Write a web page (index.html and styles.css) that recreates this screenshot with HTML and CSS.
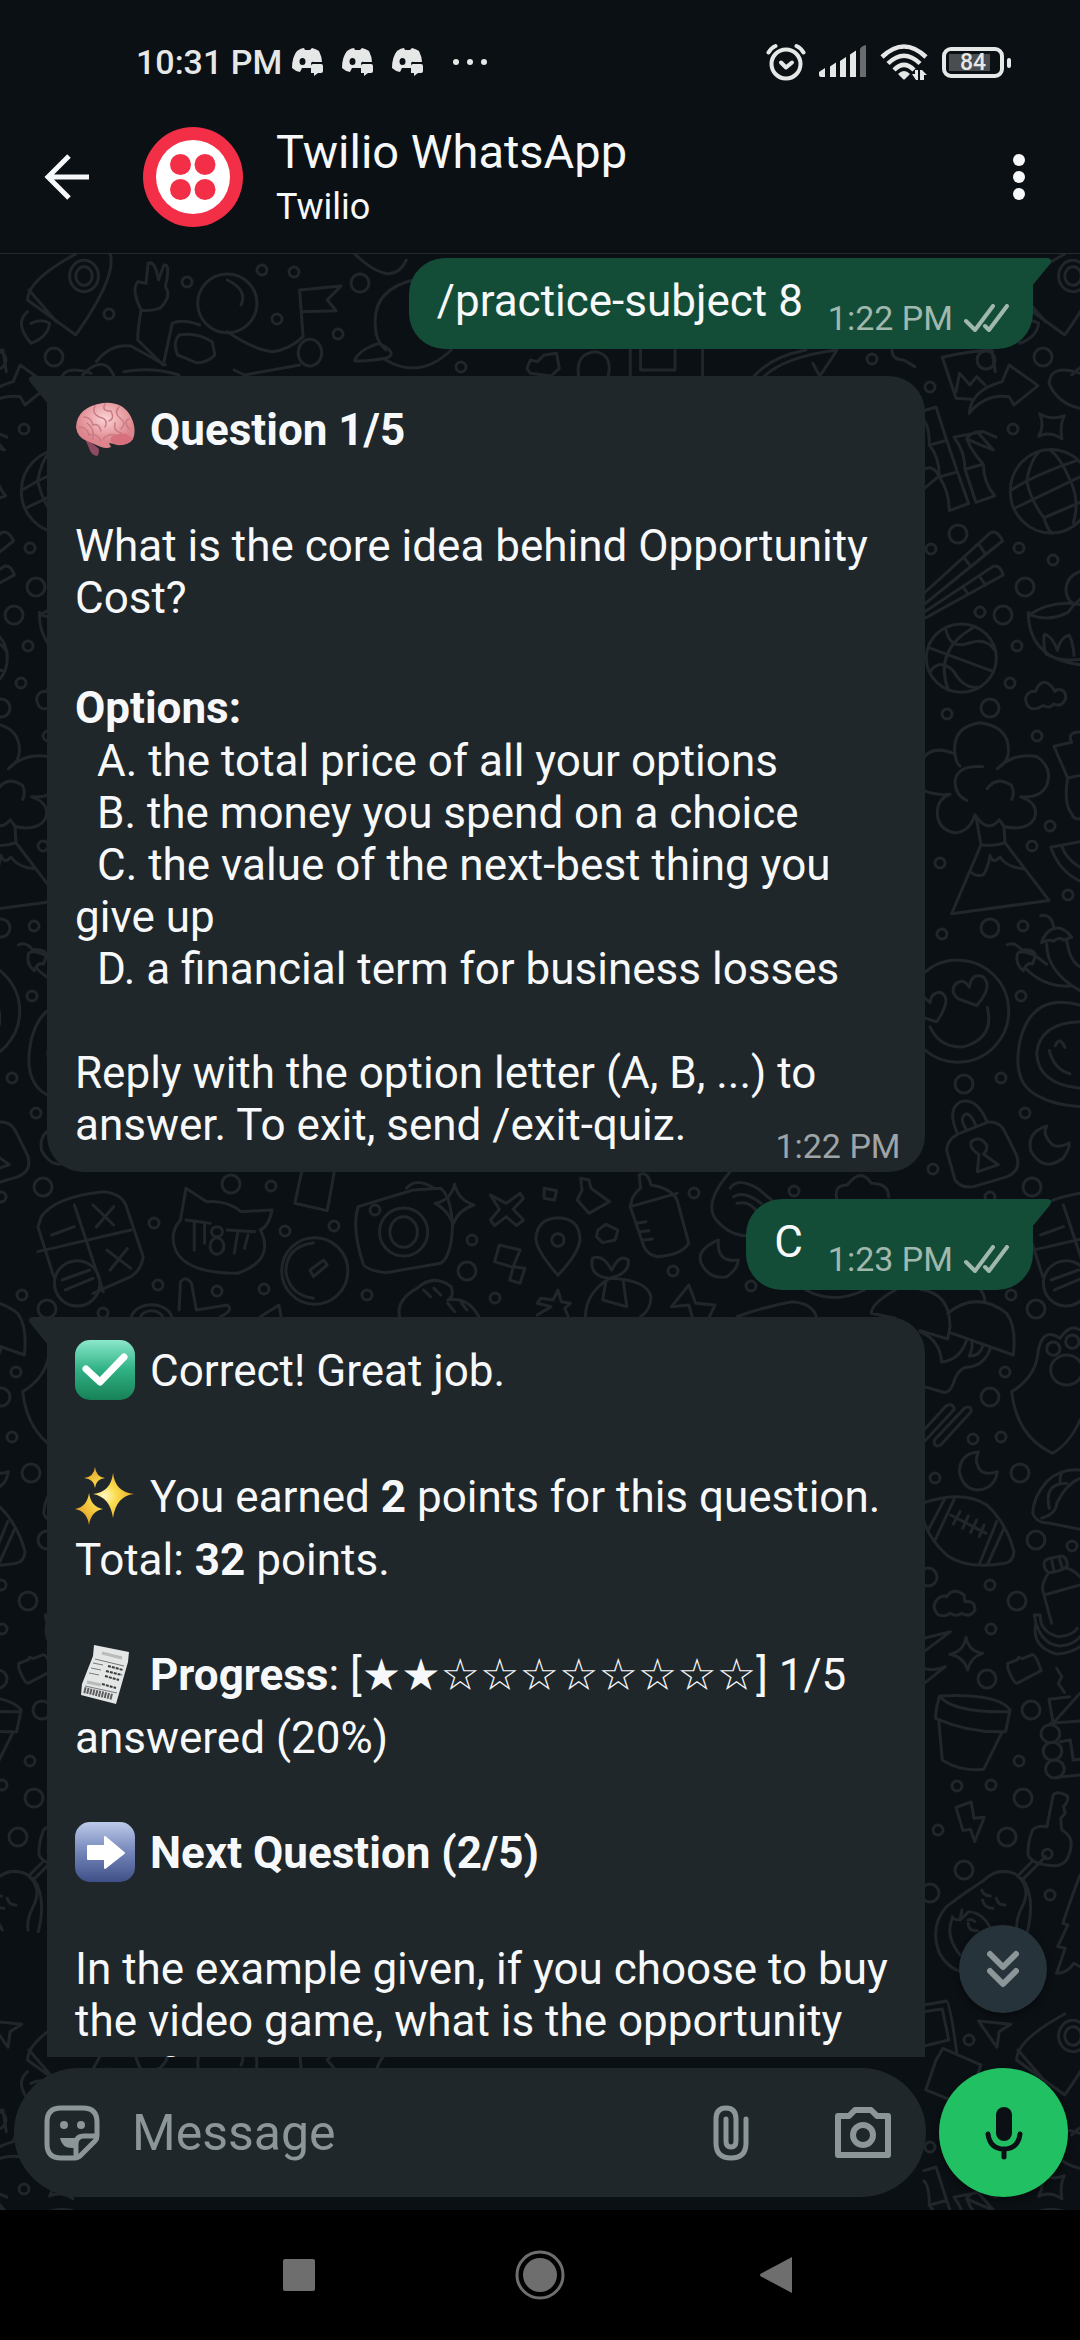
FILE: index.html
```
<!DOCTYPE html>
<html lang="en">
<head>
    <meta charset="UTF-8">
    <meta name="viewport" content="width=device-width, initial-scale=1.0">
    <title>Twilio WhatsApp</title>
    <link rel="stylesheet" href="styles.css">
</head>
<body>
    <div class="status-bar">
        <span class="clock">10:31 PM</span>
        <svg class="discord" viewBox="0 0 32 28"><use href="#discord"/></svg>
        <svg class="discord" viewBox="0 0 32 28"><use href="#discord"/></svg>
        <svg class="discord" viewBox="0 0 32 28"><use href="#discord"/></svg>
        <svg class="dots" viewBox="0 0 36 8"><circle cx="4" cy="4" r="3"/><circle cx="18" cy="4" r="3"/><circle cx="32" cy="4" r="3"/></svg>
        <div class="status-icons">
            <svg width="40" height="40" viewBox="0 0 40 40" fill="none" stroke="#e6e8e7" stroke-width="4" stroke-linecap="round" stroke-linejoin="round"><circle cx="20" cy="22" r="14.5"/><path d="M15 20.500l5 5 6-5"/><path d="M2.500 10.500Q5 6 9.500 4M30.500 4Q35 6 37.500 10.500"/></svg>
            <svg width="50" height="34" viewBox="0 0 50 34" fill="#e6e8e7"><path d="M1 27l6-4v9H3q-2 0-2-2zM12 21.500l6-4V32h-6zM22 16l6-4v20h-6zM32 9.500l6-4V32h-6z"/><path fill="#6a6d6f" d="M42 4q1-3 6-4v32h-6z"/></svg>
            <svg width="50" height="38" viewBox="0 0 50 38" fill="none" stroke="#e6e8e7" stroke-width="4.500"><path d="M2 14Q24-7 46 14M8 20.500Q24 5 40 20.500M14 27Q24 17 34 27"/><path fill="#e6e8e7" stroke="none" d="M18 31Q24 25 30 31L25 36Q24 37 23 36zM32 31h3v-4h3v10h-2zM40 27h2l5 5h-3v5h-4z"/></svg>
            <div class="battery">
                <span>84</span>
            </div>
        </div>
    </div>

    <header class="chat-header">
        <button class="back" aria-label="Back">
            <svg width="46" height="46" viewBox="0 0 46 46" fill="none" stroke="#f7f8fa" stroke-width="5"><path d="M45 23H5M25 2L4 23l21 21"/></svg>
        </button>
        <svg class="avatar" viewBox="0 0 100 100">
            <circle cx="50" cy="50" r="50" fill="#f22f46"/>
            <circle cx="50" cy="50" r="37" fill="#fff"/>
            <g fill="#f22f46"><circle cx="37.500" cy="37.500" r="10.500"/><circle cx="62" cy="37.500" r="10.500"/><circle cx="37.500" cy="62.500" r="10.500"/><circle cx="62" cy="62.500" r="10.500"/></g>
        </svg>
        <div class="contact">
            <h1>Twilio WhatsApp</h1>
            <p>Twilio</p>
        </div>
        <button class="more" aria-label="More options">
            <svg width="12" height="46" viewBox="0 0 12 46" fill="#f7f8fa"><circle cx="6" cy="6" r="6"/><circle cx="6" cy="23" r="6"/><circle cx="6" cy="40" r="6"/></svg>
        </button>
    </header>

    <div class="conversation">
        <!-- wallpaper: one tile of doodles, repeated with use -->
        <svg class="wallpaper" aria-hidden="true">
            <defs>
                <marker id="small" markerUnits="userSpaceOnUse" markerWidth="30" markerHeight="30" refX="15" refY="15"><circle cx="15" cy="15" r="5"/></marker>
                <marker id="big" markerUnits="userSpaceOnUse" markerWidth="30" markerHeight="30" refX="15" refY="15"><circle cx="15" cy="15" r="9"/></marker>
                <g id="tile">
                    <polyline class="small-dots" points="930,387 1013,429 931,549 1019,548 1053,560 980,612 1017,646 1010,683 947,714 1037,736 1050,826 1032,846 940,863 1068,895 942,934 1023,926 1021,996 1001,1078 1025,1113 933,1169 990,1197 1011,1295 1005,1372 973,1439 1001,1437 935,1478 1072,1546 990,1585 991,1629 1019,1761 957,1786 991,1785 938,1830 1050,1895 969,2040 262,270 294,272 187,282 109,314 277,319 338,334 461,367 872,359 271,1186 154,1223 285,1231 334,1226 375,1210 472,1240 694,1193 794,1191 673,1271 217,1291 158,1285 264,1289 367,1295 495,1298 103,1313 751,1286"/>
                    <polyline class="big-dots" points="958,534 1025,587 1003,615 990,708 990,928 964,1084 1032,1187 1036,1309 990,1397 1020,1473 1036,1540 928,1577 1017,1601 987,1679 1031,1710 1023,1798 964,1870 1007,1837 930,1893 360,283 1043,357 986,360 231,1184 467,1271"/>
                    <g transform="translate(0 240) scale(.6888 .3333)">
                        <path d="M160 42Q170 110 110 285L40 180Q40 120 110 42M42 150L82 245M40 215Q20 250 45 310Q70 290 72 250Q60 235 45 250"/>
                        <ellipse cx="122" cy="108" rx="21" ry="47"/><ellipse cx="122" cy="108" rx="12" ry="28"/>
                        <path d="M205 210Q190 150 200 125L212 130L215 70Q225 60 230 120L238 75Q248 70 240 140Q250 170 232 205Q215 215 205 210Q200 260 200 300L237 375L250 250Q265 235 290 255"/>
                        <ellipse cx="330" cy="190" rx="43" ry="88"/>
                        <path d="M330 120Q360 150 350 195M330 275Q370 330 395 335Q420 330 440 290M260 285Q285 275 308 305L312 345Q300 370 285 368L258 345Q250 310 260 285ZM140 365Q160 310 190 318L240 375M120 405Q150 340 165 405M180 395Q220 380 260 405M340 390L355 405L435 375"/>
                        <ellipse cx="450" cy="338" rx="17" ry="40"/>
                        <path d="M435 150L495 138L475 180L488 212L438 215M435 150L440 290M515 42Q570 150 590 60M600 120Q540 150 545 260Q545 300 560 330M515 362Q520 330 550 310Q580 340 560 355Q530 365 515 362M560 360Q610 420 655 330"/>
                        <path d="M765 385L770 360L780 365L790 345L808 340L812 385L800 408L770 400ZM840 408Q835 340 865 335Q890 345 883 408M915 408L915 330M1020 408L1020 330M930 330V390H980V330M1095 408Q1120 350 1170 330M1110 408Q1140 350 1215 330Q1200 380 1190 408L1180 370M1295 330Q1295 360 1312 360L1328 380"/>
                        <path d="M1368 352Q1400 335 1440 330L1445 395M1368 352L1388 475L1410 478M1388 455L1393 400L1408 435L1418 410L1430 435M1407 520Q1410 450 1455 425L1465 375L1507 437L1472 495L1465 470Q1430 460 1407 520M1568 400Q1525 370 1523 430Q1535 490 1568 505"/>
                    </g>
                    <g transform="translate(900 380) scale(.3333 .5102)">
                        <path d="M72 60L108 53L140 118L172 180L206 242L148 256Q148 220 118 190Q118 150 88 128Q88 90 72 80M88 128L140 118M118 190L172 180M72 175Q100 165 118 190M72 213L118 188M162 112L250 101M162 112Q195 140 195 175L228 240L284 227Q250 200 250 165L195 175M250 165Q215 140 200 115Q215 100 250 101L288 112M200 115Q240 128 280 137L235 104"/>
                        <path d="M419 66Q455 80 493 70Q478 90 486 115Q450 100 416 110Q435 90 419 66Z"/>
                        <ellipse cx="453" cy="218" rx="122" ry="82"/>
                        <path d="M335 215L380 198Q390 160 415 142M380 198Q395 240 432 270M348 250L540 190M380 198Q450 175 530 158M432 270Q440 290 455 300M432 270L540 240M513 200Q480 150 450 137M513 200Q540 240 520 280"/>
                        <path d="M72 418L270 300Q290 292 308 315L72 440M192 348L208 362M238 323L255 340M72 455L280 365Q300 362 310 382L72 468M188 405L205 420M238 385L255 400"/>
                        <ellipse cx="184" cy="545" rx="105" ry="67"/>
                        <path d="M88 525L275 570M137 488Q150 530 210 515Q260 505 285 530M220 485Q100 530 145 608M92 570Q120 545 160 570Q190 605 230 602"/>
                        <path d="M387 460Q460 430 540 440M387 460Q450 475 505 455Q520 440 540 430M385 455Q385 545 540 558M432 500Q430 530 440 538Q480 552 540 548M435 498Q460 505 472 530Q480 505 507 500Q520 515 522 540M540 375Q500 385 498 410Q498 430 520 438"/>
                        <path d="M385 640Q365 620 395 610Q410 612 410 605Q430 580 460 605Q465 615 470 607Q500 605 497 625Q485 642 460 635Q450 645 430 638Q400 650 385 640Z"/>
                        <path d="M72 740Q100 715 165 733Q155 680 240 672Q330 680 325 730Q322 750 292 762Q340 730 410 738Q460 760 440 795Q420 820 362 817Q420 830 403 860Q380 885 312 875L298 862Q262 890 225 852Q210 885 165 888Q110 880 112 845Q115 820 150 812Q110 815 72 805M165 733Q168 750 180 757M248 758Q165 755 165 790Q168 815 200 824M262 801Q290 775 335 795Q345 810 335 822M228 855L243 911L155 1046L447 1020L315 907L312 875M243 911Q280 915 315 907M210 962Q225 975 250 970Q265 955 270 932Q280 950 300 935Q320 955 370 958"/>
                        <path d="M540 905L452 916Q480 965 540 982M486 915Q500 940 540 955M540 690Q500 690 515 710L462 718Q470 730 503 780Q490 830 515 850Q520 862 540 860M503 780L540 775"/>
                        <path d="M322 1107Q345 1100 365 1117Q410 1115 405 1130L398 1145Q380 1140 370 1158Q345 1145 352 1125Q360 1115 405 1128L440 1145M375 1152Q430 1190 510 1188M422 1050Q455 1045 462 1075Q435 1080 425 1103Q445 1095 460 1100Q480 1090 490 1098L515 1092Q490 1070 462 1075M440 1105Q440 1160 540 1197M500 1098Q510 1140 540 1150"/>
                        <path d="M72 1162A153 100 0 1 1 72 1312M230 1226L175 1213Q150 1200 165 1185Q190 1170 208 1190Q215 1160 250 1170Q280 1190 230 1226M72 1210L90 1220Q95 1200 120 1200Q160 1210 110 1258L72 1250M90 1268Q120 1310 190 1307Q285 1290 262 1230"/>
                        <path d="M540 1225Q400 1200 362 1290Q330 1380 420 1405Q460 1420 540 1424M540 1258Q420 1260 410 1320Q415 1380 540 1388M448 1314Q460 1350 510 1360M466 1305Q478 1285 495 1308"/>
                        <path d="M440 1462Q380 1475 392 1510Q430 1555 490 1525Q510 1505 508 1495Q480 1505 460 1500Q425 1480 440 1462Z"/>
                        <path d="M173 1478Q140 1430 180 1415Q230 1405 262 1455M198 1468Q175 1445 200 1438Q215 1440 228 1462M140 1510Q140 1490 173 1478L262 1455Q300 1450 320 1480L350 1520Q365 1550 320 1562L220 1581Q185 1585 165 1568ZM232 1552L237 1518Q205 1505 215 1492Q240 1480 260 1500Q262 1512 250 1517L295 1538Z"/>
                    </g>
                    <g transform="translate(0 1160) scale(.6888 .3333)">
                        <path d="M60 170Q80 110 150 95Q180 100 185 150L208 290Q205 330 190 350L135 400M60 170L55 200L78 350M108 135L150 395M55 275L190 210M75 225L108 200M135 135L165 195M165 140L140 200M155 270L190 325M185 265L160 330M90 360L130 330M95 390L135 355"/>
                        <ellipse cx="112" cy="370" rx="33" ry="68"/>
                        <path d="M270 85L300 125Q330 120 350 155L395 150Q390 200 378 210Q400 300 345 340Q270 340 255 270Q245 220 262 180ZM270 180L305 190M282 190V270M297 190V250M330 210L370 215M345 220L340 280M360 225L355 265"/>
                        <ellipse cx="315" cy="215" rx="8" ry="15"/><ellipse cx="315" cy="258" rx="10" ry="25"/>
                        <path d="M438 35L428 130L475 152L485 40M455 248Q415 260 415 335Q420 405 455 415M470 300L450 330L455 350L475 315Z"/>
                        <ellipse cx="457" cy="333" rx="48" ry="100"/>
                        <path d="M520 140L600 90L640 85Q655 110 657 200Q655 290 640 310L560 338Q530 330 527 310Q510 200 520 140ZM590 85Q605 50 630 85"/>
                        <ellipse cx="586" cy="216" rx="35" ry="72"/><ellipse cx="586" cy="216" rx="20" ry="46"/>
                        <path d="M660 72Q665 120 688 135Q665 150 658 192Q650 150 632 130Q655 120 660 72ZM712 105L735 130L755 100L760 115L745 148L760 180L750 197L735 170L718 197L712 180L725 148ZM810 346Q778 270 778 235Q780 175 810 173Q842 175 842 240Q840 280 810 346ZM725 255L755 270L745 320L762 325L755 370L740 360L745 322L718 305ZM790 85L808 92L805 120L790 115ZM868 210L880 193L897 210L893 240L875 248L866 230ZM843 55L855 60L858 85L885 125L855 160L838 120L845 90Z"/>
                        <ellipse cx="810" cy="240" rx="9" ry="19"/>
                        <path d="M915 140L918 115Q925 90 930 85L928 45Q940 30 945 75Q975 85 983 120L1000 250Q990 285 955 290Q940 285 935 260L915 140L983 100M925 190L938 185M930 215L942 212M935 240L947 237M1060 35Q1020 130 1040 180Q1060 230 1090 228M1060 85Q1070 50 1100 85L1120 120M1065 110Q1080 90 1105 130M1070 130Q1090 120 1100 160M1043 240Q1010 270 1018 310Q1030 360 1055 350Q1070 330 1072 300Q1040 310 1043 240ZM1215 118Q1210 75 1230 75Q1250 20 1265 70Q1290 70 1290 110"/>
                        <path d="M260 450L262 365Q270 345 278 370L285 450L330 435Q340 450 320 470M580 470Q575 420 605 385Q630 340 655 380Q660 410 650 420Q680 410 695 470M615 390L625 410M630 385L640 405M650 430L660 455M670 430L678 450M780 465L800 440L780 430L785 415L803 420L810 390L815 425L828 430L820 445L825 470M885 355Q855 350 860 295Q875 280 888 330Q900 280 912 300Q915 340 885 355Q850 400 850 470M885 355Q940 360 945 410Q945 450 930 470M880 360L875 420L910 440L905 365M1000 375L975 440L1000 435L1005 470M1000 375L1010 430L1038 435L1030 470M1070 470Q1110 440 1150 425Q1180 430 1185 470M1170 390Q1210 435 1255 390M1300 390Q1265 430 1265 460L1300 475M378 470L405 435L408 470"/>
                        <ellipse cx="220" cy="480" rx="30" ry="46"/><ellipse cx="220" cy="480" rx="17" ry="28"/>
                    </g>
                    <g transform="translate(900 1160) scale(.3333)">
                        <path d="M60 388Q150 400 150 500L143 537L60 512M143 460Q230 390 320 460Q350 500 340 585L150 518M240 388Q255 405 255 428M60 515Q120 540 125 606Q180 600 200 540M215 545Q220 560 208 588Q240 590 248 558M270 568Q250 620 200 622Q175 625 160 670Q150 700 130 697L72 680"/>
                        <path d="M72 810L138 738Q160 728 163 748L72 846M103 840L195 743Q215 735 213 755L122 855Q100 865 103 840ZM235 876Q180 880 178 935Q190 990 235 990Q285 985 292 935Q265 945 245 935Q220 910 235 876Z"/>
                        <path d="M72 1028Q190 990 260 1035Q320 1090 342 1175Q340 1205 315 1210Q200 1230 140 1185Q90 1140 72 1085M135 1015L85 1110M165 1012L103 1145M290 1085L237 1215M312 1105L262 1215M152 1065L258 1120M180 1055L160 1092M205 1068L188 1105M230 1080L212 1117M252 1095L238 1130"/>
                        <path d="M115 1365Q90 1340 115 1315Q130 1305 140 1310Q160 1280 192 1305L195 1325Q225 1320 225 1350Q210 1375 185 1360Q170 1372 150 1360Q135 1372 115 1365Z"/>
                        <path d="M335 695Q410 650 415 570Q430 500 480 535Q510 490 540 510M335 695Q350 830 458 880Q510 850 540 780"/>
                        <circle cx="460" cy="566" r="20"/><circle cx="517" cy="545" r="20"/><ellipse cx="500" cy="630" rx="48" ry="45"/>
                        <path d="M540 930Q480 925 440 965Q400 1010 398 1060Q410 1090 440 1088L540 1108M425 1075Q470 1060 470 1030Q500 970 540 955M448 1045Q430 970 500 970M480 968Q480 940 490 935M432 1215Q430 1200 450 1195L485 1188Q500 1190 502 1215Q500 1230 450 1238Q435 1235 432 1215M455 1200L462 1232M478 1195L487 1225M445 1240Q425 1270 428 1290L455 1390M540 1250Q520 1230 500 1225M432 1305L540 1275"/>
                    </g>
                    <g transform="translate(540 1560) scale(.3444 .3333)">
                        <path d="M1115 235L1192 215L1115 275M1115 325Q1150 335 1177 320L1115 370M1237 232Q1245 275 1285 280Q1250 290 1242 330Q1230 290 1190 283Q1230 275 1237 232ZM1358 310L1385 300L1390 292L1400 296L1430 284Q1440 284 1455 332L1385 370Q1375 370 1358 325Z"/>
                        <path d="M1435 165L1453 165Q1450 215 1505 230Q1550 225 1560 205M1435 165L1440 190Q1425 260 1500 282Q1540 280 1568 260M1440 190Q1460 255 1510 258Q1550 255 1568 230"/>
                        <path d="M1160 408Q1150 440 1148 475Q1250 520 1352 515L1365 450Q1330 400 1160 408Q1200 460 1365 455M1158 485L1168 600Q1220 635 1288 628L1340 520M1208 742L1252 726L1260 775L1290 772L1262 845L1250 808L1228 812Z"/>
                        <path d="M1472 800L1490 705Q1500 690 1532 708Q1535 725 1520 740L1525 760L1512 775L1515 810Q1550 830 1540 870Q1530 920 1490 917Q1430 915 1417 885Q1415 850 1430 810Q1445 795 1472 800M1468 890L1405 955M1430 903L1390 945"/>
                        <circle cx="1473" cy="882" r="14"/>
                        <path d="M1380 942Q1330 920 1290 960Q1230 1000 1180 1040Q1130 1100 1160 1180Q1180 1220 1220 1235M1380 942Q1430 980 1400 1040Q1380 1080 1385 1110M1400 955Q1440 1010 1415 1115M1310 1110Q1290 1060 1245 1055L1220 1080L1225 1050M1220 1080Q1200 1080 1197 1070M1197 1075Q1175 1130 1220 1185M1283 990Q1285 1005 1308 1008M1285 1020Q1290 1045 1315 1045M1325 1015Q1330 1035 1350 1035M1243 1080Q1255 1075 1262 1085M1243 1090Q1245 1115 1270 1112"/>
                        <path d="M1568 945Q1540 1020 1518 1090L1533 1095L1503 1160L1525 1165Q1510 1210 1500 1240Q1530 1240 1550 1210L1568 1220M1478 418L1538 410M1478 418L1490 490L1568 400M1482 490L1568 483M1500 325L1515 350L1505 370L1523 397M1510 545L1540 540L1548 600L1568 598M1500 652L1568 645"/>
                        <circle cx="1482" cy="521" r="27"/><circle cx="1488" cy="574" r="27"/><circle cx="1495" cy="627" r="27"/>
                        <path d="M1115 1335L1180 1323Q1190 1325 1210 1478M1115 1355L1168 1347L1187 1440L1115 1458M1150 1500L1170 1465L1280 1515L1240 1640L1120 1590ZM1273 1383L1367 1393L1333 1415L1327 1462Z"/>
                    </g>
                </g>
            </defs>
            <g transform="translate(0 -254)">
                <use href="#tile" x="-989"/>
                <use href="#tile"/>
                <use href="#tile" x="989"/>
                <use href="#tile" x="-989" y="1760"/>
                <use href="#tile" y="1760"/>
                <use href="#tile" x="989" y="1760"/>
            </g>
        </svg>

        <main class="messages">
            <div class="bubble out">
                <p>/practice-subject 8</p>
                <span class="meta">1:22 PM <svg class="ticks" viewBox="0 0 46 28"><use href="#ticks"/></svg></span>
            </div>

            <div class="bubble in">
                <p class="line-emoji"><svg class="emoji" viewBox="0 0 60 60"><use href="#brain"/></svg><b>Question 1/5</b></p>
                <p class="gap-m">What is the core idea behind Opportunity Cost?</p>
                <p class="gap-m"><b>Options:</b></p>
                <ul>
                    <li>A. the total price of all your options</li>
                    <li>B. the money you spend on a choice</li>
                    <li>C. the value of the next-best thing you give up</li>
                    <li>D. a financial term for business losses</li>
                </ul>
                <p class="gap-s">Reply with the option letter (A, B, ...) to answer. To exit, send /exit-quiz.</p>
                <span class="meta">1:22 PM</span>
            </div>

            <div class="bubble out">
                <p>C</p>
                <span class="meta">1:23 PM <svg class="ticks" viewBox="0 0 46 28"><use href="#ticks"/></svg></span>
            </div>

            <div class="bubble in">
                <p class="line-emoji"><svg class="emoji" viewBox="0 0 60 60"><use href="#check"/></svg>Correct! Great job.</p>
                <p class="line-emoji gap-l"><svg class="emoji" viewBox="0 0 60 60"><use href="#sparkles"/></svg>You earned <b>2</b> points for this question. Total: <b>32</b> points.</p>
                <p class="line-emoji gap-s"><svg class="emoji" viewBox="0 0 60 60"><use href="#receipt"/></svg><b>Progress</b>: [<span class="stars">★★☆☆☆☆☆☆☆☆</span>] 1/5 answered (20%)</p>
                <p class="line-emoji gap-s"><svg class="emoji" viewBox="0 0 60 60"><use href="#next"/></svg><b>Next Question (2/5)</b></p>
                <p class="gap-m">In the example given, if you choose to buy the video game, what is the opportunity cost?</p>
            </div>

            <button class="scroll-down" aria-label="Scroll to bottom">
                <svg width="32" height="38" viewBox="0 0 32 38" fill="none" stroke="#8c9598" stroke-width="6" stroke-linecap="round" stroke-linejoin="round"><path d="M3 4l13 13L29 4M3 21l13 13L29 21"/></svg>
            </button>
        </main>

        <form class="composer">
            <div class="message-box">
                <button type="button" aria-label="Stickers">
                    <svg width="56" height="56" viewBox="0 0 56 56" fill="none" stroke="#8c9598" stroke-width="5" stroke-linejoin="round"><path d="M17 3H39Q53 3 53 17V31Q53 34 51 36L37 50Q34 53 31 53H17Q3 53 3 39V17Q3 3 17 3Z"/><path d="M52 31H40Q32 31 32 39V52"/><path fill="#8c9598" stroke="none" d="M16 33H34Q30 37 30 43Q18 44 16 33Z"/><g fill="#8c9598" stroke="none"><circle cx="20" cy="20" r="4"/><circle cx="37" cy="20" r="4"/></g></svg>
                </button>
                <input type="text" placeholder="Message" aria-label="Message">
                <button type="button" aria-label="Attach">
                    <svg width="36" height="56" viewBox="0 0 36 56" fill="none" stroke="#8c9598" stroke-width="5" stroke-linecap="round"><path d="M33 14V38Q33 53 18 53Q3 53 3 38V14Q3 3 13 3Q23 3 23 14V36Q23 42 18 42Q13 42 13 36V14"/></svg>
                </button>
                <button type="button" aria-label="Camera">
                    <svg width="56" height="52" viewBox="0 0 56 52" fill="none" stroke="#8c9598" stroke-width="6" stroke-linejoin="round"><path d="M3 9H14L20 3H36L42 9H53V48H3Z"/><circle cx="28" cy="28" r="10"/></svg>
                </button>
            </div>
            <button type="button" class="mic" aria-label="Voice message">
                <svg width="38" height="54" viewBox="0 0 38 54"><rect x="11" y="1" width="16" height="34" rx="8" fill="#0b1014"/><path d="M3 28Q5 43 19 43Q33 43 35 28M19 43V51" fill="none" stroke="#0b1014" stroke-width="5" stroke-linecap="round"/></svg>
            </button>
        </form>
    </div>

    <nav class="system-nav">
        <button aria-label="Recent apps"><svg width="50" height="50" viewBox="0 0 50 50"><rect x="9" y="9" width="32" height="32" rx="2"/></svg></button>
        <button aria-label="Home"><svg width="50" height="50" viewBox="0 0 50 50"><circle cx="25" cy="25" r="17"/><circle cx="25" cy="25" r="23" fill="none" stroke="#6e6e6e" stroke-width="3"/></svg></button>
        <button aria-label="Back"><svg width="50" height="50" viewBox="0 0 50 50"><path d="M36 7V43L5 26.500Q3 25 5 23.500Z"/></svg></button>
    </nav>

    <!-- icons and emoji -->
    <svg class="sprite" aria-hidden="true">
        <defs>
            <linearGradient id="green" x2="0" y2="1"><stop offset="0" stop-color="#8be8cb"/><stop offset=".5" stop-color="#2fb184"/><stop offset="1" stop-color="#178156"/></linearGradient>
            <linearGradient id="blue" x2="0" y2="1"><stop offset="0" stop-color="#bccbea"/><stop offset=".5" stop-color="#7485b9"/><stop offset="1" stop-color="#3f5088"/></linearGradient>
            <radialGradient id="pink" cx=".5" cy=".35"><stop offset="0" stop-color="#fbd3d4"/><stop offset="1" stop-color="#dd858c"/></radialGradient>
            <radialGradient id="gold"><stop offset="0" stop-color="#fff8c4"/><stop offset=".4" stop-color="#fbdc4d"/><stop offset="1" stop-color="#e9a92c"/></radialGradient>
        </defs>
        <symbol id="discord" viewBox="0 0 32 28">
            <path fill="#e6e8e7" fill-rule="evenodd" d="M5 3Q9 0 12 0L13 2H18L20 0Q24 1 27 3Q30 9 30 14H22Q19 13 19 16V20H10L8 24Q3 23 0 20Q0 9 5 3ZM10.500 10A3 3.500 0 1 0 10.500 17A3 3.500 0 1 0 10.500 10Z"/>
            <path fill="#e6e8e7" d="M21 16H29Q31 16 31 18V23Q31 25 29 25H26L22 28V25H19V18Q19 16 21 16Z"/>
        </symbol>
        <symbol id="ticks" viewBox="0 0 46 28"><path fill="none" stroke="#a1b8af" stroke-width="4" stroke-linecap="round" stroke-linejoin="round" d="M2 17L11 26L29 2M21 22L25 26L43 2"/></symbol>
        <symbol id="brain" viewBox="0 0 60 60">
            <path fill="#8d4a60" d="M10 40Q20 46 24 50Q24 56 22 57Q16 56 14 49Z"/>
            <path fill="url(#pink)" d="M28 4Q48 2 56 18Q62 30 58 40Q54 46 44 46L34 44L36 48Q32 50 26 48L12 42Q2 38 1 28Q2 8 28 4Z"/>
            <path fill="#d6707c" d="M36 38Q50 30 58 40Q52 47 42 46Q34 44 36 38Z"/>
            <path fill="none" stroke="#c97a84" stroke-width="1.500" stroke-linecap="round" d="M20 7Q16 14 24 18Q34 20 30 28M30 5Q26 12 36 12Q40 20 34 22M44 8Q38 14 46 20Q52 24 46 30M9 18Q16 18 18 26Q24 24 26 32M4 28Q12 28 14 36Q22 34 26 42M54 20Q48 22 54 30M28 40Q34 34 40 36M18 40Q20 30 12 24M40 24Q38 32 46 34"/>
        </symbol>
        <symbol id="check" viewBox="0 0 60 60"><rect width="60" height="60" rx="15" fill="url(#green)"/><path fill="none" stroke="#fff" stroke-width="7" stroke-linecap="round" stroke-linejoin="round" d="M11 29L25 42L49 17"/></symbol>
        <symbol id="next" viewBox="0 0 60 60"><rect width="60" height="60" rx="15" fill="url(#blue)"/><path fill="#fff" stroke="#fff" stroke-width="2" stroke-linejoin="round" d="M13 24H30V15L49 31L30 46V37H13Z"/></symbol>
        <symbol id="sparkles" viewBox="0 0 60 60"><path fill="url(#gold)" d="M38 7Q40 26 59 28Q41 30 38 52Q35 31 18 28Q36 26 38 7ZM20 1Q21 11 30 12Q21 13 20 22Q19 13 9 12Q19 11 20 1ZM14 27Q16 41 28 43Q16 45 14 59Q12 45 0 43Q12 41 14 27Z"/></symbol>
        <symbol id="receipt" viewBox="0 0 60 60">
            <path fill="#e4e5e5" d="M19 1L54 8L53 18L41 60L6 51L7 40L18 12Z"/>
            <path fill="none" stroke="#b9bbbb" stroke-width="3" d="M27 9L47 14M12 38L26 41"/>
            <path fill="none" stroke="#77797a" stroke-width="1" d="M20 15L49 22M18 19L28 21M16 24L26 26M14 29L24 31M10 42L42 49"/>
            <path fill="none" stroke="#3b3c3d" stroke-width="2" stroke-dasharray="3 1" d="M33 22L48 26M31 27L47 31M30 32L44 36M27 40L41 44"/>
            <path fill="none" stroke="#5b5d5e" stroke-width="6" stroke-dasharray="2 1" d="M9 46L38 53"/>
        </symbol>
    </svg>
</body>
</html>
```
FILE: styles.css
```
* {
    box-sizing: border-box;
}
body {
    margin: 0;
    height: 100vh;
    display: flex;
    flex-direction: column;
    overflow: hidden;
    background-color: #0b1014;
    color: #f7f8fa;
    font-family: Roboto, "Noto Sans", sans-serif;
}
h1, p, ul {
    margin: 0;
    padding: 0;
    font-weight: 400;
}
svg {
    display: block;
    flex: none;
}
button {
    display: flex;
    align-items: center;
    justify-content: center;
    padding: 0;
    border: none;
    background: none;
    cursor: pointer;
}
.sprite { position: absolute; width: 0; height: 0; }

/* status bar */
.status-bar {
    display: flex;
    align-items: center;
    height: 100px;
    padding: 24px 69px 0 136px;
    flex: none;
}
.clock {
    margin-right: 10px;
    color: #e6e8e7;
    font-size: 34px;
    font-weight: 500;
    line-height: 40px;
}
.discord { width: 32px; height: 28px; margin-right: 18px; }
.dots { width: 36px; height: 8px; margin-left: 10px; fill: #e6e8e7; }
.status-icons {
    display: flex;
    align-items: center;
    gap: 12px;
    margin-left: auto;
}
.battery {
    position: relative;
    width: 62px;
    height: 31px;
    margin-right: 7px;
    padding: 3px;
    border: 4px solid #e6e8e7;
    border-radius: 9px;
}
.battery span {
    display: block;
    width: 41px;
    padding-left: 11px;
    background-color: #4a4d50;
    color: #e6e8e7;
    font-size: 23px;
    font-weight: 500;
    line-height: 17px;
}
.battery::after {
    content: "";
    position: absolute;
    top: 7px;
    right: -11px;
    width: 4px;
    height: 10px;
    border-radius: 2px;
    background-color: #e6e8e7;
}

/* chat header */
.chat-header {
    display: flex;
    align-items: center;
    flex: none;
    height: 153px;
    padding: 0 55px 0 44px;
}
.avatar { width: 100px; height: 100px; margin: 0 33px 0 53px; }
.contact h1 { font-size: 47px; line-height: 62px; }
.contact p { font-size: 36px; line-height: 49px; }
.more { margin-left: auto; }

/* conversation */
.conversation {
    position: relative;
    flex: 1;
    min-height: 0;
    display: flex;
    flex-direction: column;
    border-top: 1px solid #23292d;
}
.wallpaper {
    position: absolute;
    inset: 0;
    width: 100%;
    height: 100%;
    fill: none;
    stroke: #20262a;
    stroke-width: 3;
    stroke-linecap: round;
    stroke-linejoin: round;
}
.wallpaper path, .wallpaper ellipse, .wallpaper circle { vector-effect: non-scaling-stroke; }
.wallpaper polyline { stroke: none; }
.wallpaper marker { stroke: #20262a; }
.small-dots { marker: url(#small); }
.big-dots { marker: url(#big); }

.messages {
    position: relative;
    flex: 1;
    min-height: 0;
    overflow: hidden;
    display: flex;
    flex-direction: column;
    gap: 27px;
    padding: 4px 47px 0;
}
.bubble {
    position: relative;
    flex: none;
    max-width: 89%;
    border-radius: 36px;
    font-size: 44px;
    line-height: 52px;
}
.bubble::before {
    content: "";
    position: absolute;
    top: 0;
    width: 20px;
    height: 28px;
}
.bubble.out {
    display: flex;
    align-items: flex-end;
    gap: 25px;
    align-self: flex-end;
    padding: 17px 23px 22px 28px;
    border-top-right-radius: 0;
    background-color: #144d37;
}
.bubble.out::before {
    right: -19px;
    background-color: #144d37;
    clip-path: path("M0 0H16Q21 1 18 6L0 28Z");
}
.bubble.in {
    align-self: flex-start;
    padding: 23px 30px 21px 28px;
    border-top-left-radius: 0;
    background-color: #1f272a;
}
.bubble.in::before {
    left: -19px;
    background-color: #1f272a;
    clip-path: path("M20 0H4Q-1 1 2 6L20 28Z");
}
.bubble ul { margin-top: 1px; list-style: none; }
.bubble li { text-indent: 22px; }
.line-emoji { line-height: 63px; }
.gap-s { margin-top: 52px; }
.gap-m { margin-top: 58px; }
.gap-l { margin-top: 63px; }
.emoji {
    display: inline-block;
    width: 60px;
    height: 60px;
    margin-right: 15px;
    vertical-align: -14px;
}
.stars { font-family: "DejaVu Sans", sans-serif; line-height: 1; }
.meta {
    display: flex;
    align-items: center;
    gap: 11px;
    color: #a1b8af;
    font-size: 34px;
    line-height: 38px;
}
.out .meta { margin-bottom: -10px; }
.in .meta {
    position: absolute;
    right: 24px;
    bottom: 7px;
    color: #9fa4a6;
}
.ticks { width: 46px; height: 28px; }

.scroll-down {
    position: absolute;
    right: 33px;
    bottom: 44px;
    width: 88px;
    height: 88px;
    border-radius: 50%;
    background-color: #27333a;
    box-shadow: 0 3px 6px rgba(0,0,0,0.4);
}

/* composer */
.composer {
    position: relative;
    display: flex;
    align-items: center;
    gap: 13px;
    flex: none;
    padding: 11px 12px 13px 14px;
}
.message-box {
    display: flex;
    align-items: center;
    flex: 1;
    min-width: 0;
    height: 129px;
    padding: 0 35px 0 30px;
    border-radius: 65px;
    background-color: #1f272a;
}
.message-box input {
    flex: 1;
    min-width: 0;
    margin-left: 32px;
    padding: 0;
    border: none;
    outline: none;
    background: none;
    color: #f7f8fa;
    font: 50px Roboto, sans-serif;
}
.message-box input::placeholder { color: #8c9598; opacity: 1; }
.message-box input ~ button:last-child { margin-left: 86px; }
.mic {
    width: 129px;
    height: 129px;
    border-radius: 50%;
    background-color: #21c063;
    box-shadow: 0 3px 6px rgba(0,0,0,0.4);
}

/* android navigation */
.system-nav {
    display: flex;
    justify-content: center;
    align-items: center;
    gap: 191px;
    flex: none;
    height: 130px;
    background-color: #000;
}
.system-nav svg { fill: #6e6e6e; }
```
